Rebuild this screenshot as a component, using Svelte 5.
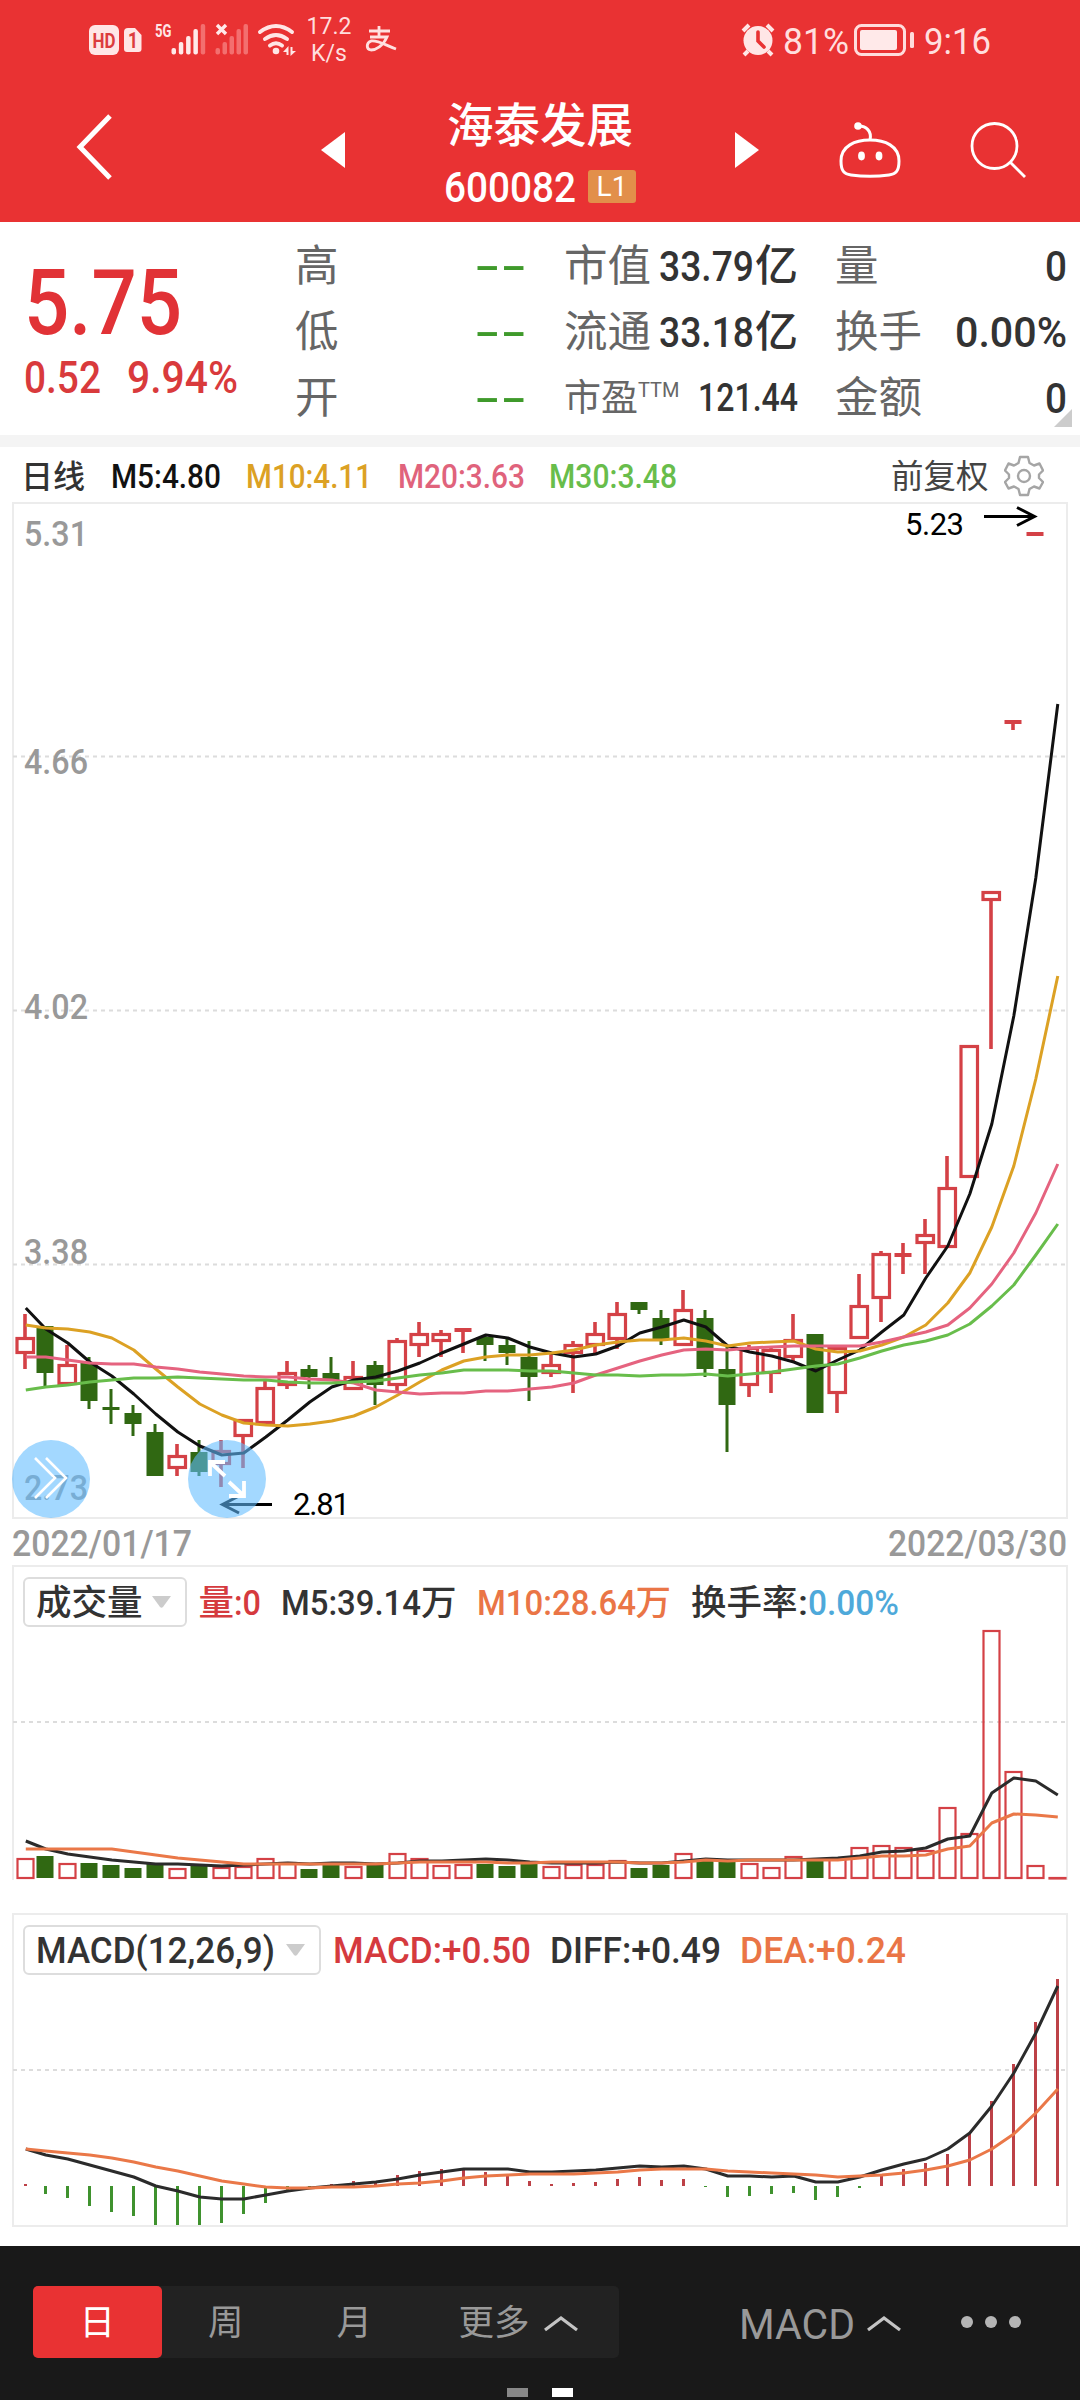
<script lang="ts">
  // x position of the n-th trading day, the first one is pushed off the frame a little
  const X0 = 23;
  const STEP = 22;
  const dayX = (i: number) => (i === 0 ? X0 + 2 : X0 + STEP * i);

  function line(values: number[]) {
    return values.map((y, i) => `${dayX(i) + 0.8},${y}`).join(' ');
  }

  // [high, body top, body bottom, low, up?]
  const candles: [number, number, number, number, number][] = [
    [1314, 1337, 1354, 1369, 1], [1326, 1326, 1373, 1387, 0], [1345, 1364, 1385, 1385, 1],
    [1357, 1362, 1401, 1409, 0], [1389, 1407, 1410, 1424, 0], [1405, 1413, 1424, 1436, 0],
    [1424, 1432, 1476, 1476, 0], [1444, 1455, 1469, 1476, 1], [1440, 1452, 1472, 1476, 0],
    [1440, 1450, 1465, 1487, 1], [1419, 1419, 1437, 1468, 1], [1381, 1387, 1424, 1424, 1],
    [1361, 1372, 1386, 1389, 1], [1365, 1369, 1377, 1389, 0], [1357, 1373, 1380, 1380, 0],
    [1361, 1376, 1390, 1390, 1], [1361, 1365, 1385, 1405, 0], [1338, 1340, 1386, 1391, 1],
    [1322, 1333, 1346, 1357, 1], [1330, 1333, 1342, 1357, 1], [1328, 1328, 1332, 1353, 1],
    [1336, 1337, 1345, 1361, 0], [1339, 1345, 1353, 1365, 0], [1341, 1357, 1377, 1401, 0],
    [1353, 1364, 1374, 1377, 1], [1341, 1344, 1354, 1393, 1], [1322, 1333, 1346, 1354, 1],
    [1302, 1313, 1340, 1349, 1], [1302, 1302, 1310, 1314, 0], [1310, 1318, 1339, 1345, 0],
    [1290, 1309, 1346, 1346, 1], [1310, 1318, 1369, 1377, 0], [1346, 1369, 1405, 1452, 0],
    [1345, 1347, 1386, 1397, 1], [1346, 1349, 1374, 1393, 1], [1314, 1339, 1358, 1361, 1],
    [1334, 1334, 1413, 1413, 0], [1345, 1347, 1394, 1413, 1], [1274, 1305, 1339, 1339, 1],
    [1251, 1253, 1299, 1322, 1], [1243, 1253, 1257, 1274, 1], [1219, 1234, 1244, 1274, 1],
    [1156, 1187, 1248, 1248, 1], [1045, 1045, 1178, 1178, 1], [891, 891, 901, 1049, 1],
    [720, 720, 724, 730, 1], [532, 532, 536, 536, 1]
  ];

  const ma5 = [1308, 1329, 1343, 1362, 1376, 1394, 1414, 1432, 1446, 1455, 1453, 1437, 1420, 1402, 1387, 1380, 1377, 1371, 1363, 1353, 1344, 1335, 1338, 1347, 1353, 1357, 1354, 1346, 1333, 1327, 1320, 1327, 1346, 1352, 1356, 1362, 1371, 1360, 1350, 1332, 1315, 1278, 1246, 1194, 1124, 1016, 878, 704];
  const ma10 = [1325, 1328, 1329, 1332, 1338, 1350, 1369, 1387, 1404, 1415, 1423, 1425, 1426, 1424, 1421, 1416, 1407, 1395, 1382, 1370, 1361, 1357, 1355, 1355, 1353, 1350, 1345, 1342, 1340, 1340, 1338, 1341, 1346, 1343, 1342, 1341, 1349, 1352, 1351, 1345, 1337, 1325, 1303, 1273, 1227, 1166, 1079, 976];
  const ma20 = [1357, 1357, 1360, 1363, 1364, 1364, 1367, 1369, 1372, 1374, 1376, 1377, 1377, 1379, 1380, 1383, 1390, 1392, 1394, 1393, 1393, 1391, 1391, 1389, 1387, 1383, 1375, 1368, 1361, 1355, 1350, 1349, 1350, 1348, 1347, 1346, 1346, 1346, 1346, 1342, 1337, 1332, 1325, 1308, 1284, 1253, 1213, 1164];
  const ma30 = [1390, 1387, 1385, 1382, 1380, 1378, 1378, 1377, 1378, 1379, 1380, 1380, 1382, 1383, 1383, 1382, 1381, 1378, 1375, 1373, 1370, 1370, 1370, 1371, 1371, 1373, 1375, 1375, 1376, 1375, 1375, 1374, 1376, 1374, 1372, 1369, 1366, 1364, 1358, 1351, 1345, 1341, 1335, 1324, 1306, 1285, 1255, 1224];

  const volumes = [1858, 1856, 1863, 1863, 1865, 1868, 1864, 1868, 1866, 1867, 1866, 1858, 1862, 1869, 1865, 1866, 1865, 1853, 1858, 1865, 1864, 1864, 1866, 1861, 1866, 1864, 1864, 1860, 1868, 1865, 1853, 1859, 1862, 1863, 1867, 1856, 1860, 1858, 1847, 1845, 1847, 1850, 1807, 1833, 1630, 1771, 1865, 1877];
  const volumeDown = [1, 3, 4, 5, 6, 8, 13, 14, 16, 21, 22, 23, 28, 29, 31, 32, 36];
  const vma5 = [1841, 1849, 1854, 1857, 1860, 1862, 1864, 1864, 1865, 1866, 1865, 1864, 1863, 1864, 1863, 1863, 1864, 1863, 1861, 1861, 1860, 1859, 1860, 1862, 1863, 1863, 1863, 1862, 1863, 1863, 1861, 1859, 1860, 1860, 1860, 1860, 1859, 1858, 1856, 1852, 1851, 1848, 1839, 1836, 1793, 1778, 1781, 1795];
  const vma10 = [1849, 1849, 1849, 1849, 1849, 1852, 1855, 1858, 1860, 1862, 1864, 1864, 1864, 1864, 1864, 1864, 1864, 1863, 1862, 1862, 1862, 1862, 1863, 1863, 1862, 1862, 1862, 1862, 1863, 1863, 1862, 1860, 1861, 1860, 1860, 1860, 1860, 1860, 1858, 1856, 1856, 1855, 1849, 1846, 1823, 1814, 1815, 1817];

  const ZERO = 2186;
  const macd = [2184, 2194, 2198, 2206, 2212, 2216, 2225, 2225, 2225, 2223, 2214, 2203, 2192, 2187, 2184, 2181, 2181, 2175, 2171, 2169, 2170, 2172, 2176, 2181, 2184, 2183, 2182, 2179, 2177, 2180, 2179, 2187, 2197, 2196, 2194, 2193, 2200, 2197, 2188, 2176, 2169, 2163, 2154, 2133, 2101, 2064, 2022, 1979];
  const diff = [2149, 2155, 2159, 2165, 2171, 2177, 2186, 2191, 2197, 2199, 2199, 2195, 2191, 2188, 2186, 2184, 2182, 2179, 2175, 2172, 2169, 2169, 2169, 2172, 2172, 2171, 2170, 2168, 2166, 2167, 2166, 2169, 2176, 2176, 2177, 2176, 2182, 2182, 2177, 2170, 2164, 2159, 2149, 2133, 2106, 2073, 2033, 1986];
  const dea = [2149, 2151, 2153, 2155, 2158, 2162, 2167, 2171, 2176, 2181, 2184, 2187, 2188, 2188, 2187, 2187, 2186, 2184, 2183, 2181, 2178, 2176, 2175, 2174, 2174, 2174, 2173, 2172, 2170, 2169, 2169, 2169, 2171, 2172, 2173, 2174, 2175, 2177, 2176, 2175, 2173, 2170, 2166, 2160, 2149, 2134, 2113, 2089];

  const axis = [
    { y: 546, label: '5.31' },
    { y: 774, label: '4.66' },
    { y: 1019, label: '4.02' },
    { y: 1264, label: '3.38' },
    { y: 1500, label: '2.73' }
  ];
  const bars = [48, 42, 36, 29, 24];
</script>

<!-- Condensed figures: text squeezed to a fixed width -->
{#snippet num(text: string, w: number, size: number)}
  <svg class="num" width={w} height={size}>
    <text x="0" y={size * 0.856} font-size={size} textLength={w} lengthAdjust="spacingAndGlyphs">{text}</text>
  </svg>
{/snippet}

{#snippet noValue()}
  <svg class="no-value" width="53" height="62">
    <text x="0" y="47" font-size="50" textLength="53" lengthAdjust="spacingAndGlyphs">--</text>
  </svg>
{/snippet}

{#snippet caret()}
  <svg class="caret" width="19" height="12"><path d="M0 0H19L11 11Q9.500 12.500 8 11Z" fill="#ccc" /></svg>
{/snippet}

{#snippet chevronUp()}
  <svg width="36" height="18"><path d="M2 15L18 3L34 15" fill="none" stroke="#c4c4c4" stroke-width="3.200" /></svg>
{/snippet}

<div class="screen">
  <header>
    <div class="status">
      <svg class="status-left" width="240" height="80" viewBox="80 0 240 80">
        <rect x="89" y="25" width="30" height="30" rx="6" fill="#ffe6e6" />
        <text x="92.500" y="47.500" font-size="20" font-weight="700" fill="#dc3c3e" textLength="23" lengthAdjust="spacingAndGlyphs">HD</text>
        <path d="M128 28H135L141.500 35V49Q141.500 52 138.500 52H127Q124 52 124 49V32Q124 28 128 28Z" fill="#ffe6e6" />
        <text x="128" y="48" font-size="22" font-weight="700" fill="#dc3c3e" textLength="10" lengthAdjust="spacingAndGlyphs">1</text>
        <text x="155" y="37" font-size="18" font-weight="700" fill="#ffe6e6" textLength="16.500" lengthAdjust="spacingAndGlyphs">5G</text>
        {#each bars as y, i}
          <rect x={171.5 + i * 7.3} {y} width="4.500" height={54.5 - y} rx="2" fill={i < 4 ? '#ffe9e9' : '#f36f6f'} />
          <rect x={215.5 + i * 7} {y} width="4.500" height={54.5 - y} rx="2" fill="#f36f6f" />
        {/each}
        <path d="M217 25L226 34M226 25L217 34" stroke="#ffe9e9" stroke-width="3.400" />
        <g fill="none" stroke="#ffe6e6" stroke-width="4" stroke-linecap="round">
          <path d="M260 32Q276 20 292 32" />
          <path d="M265 39Q276 31 287 39" />
          <path d="M270 45.500Q276 41 282 45.500" />
        </g>
        <circle cx="276" cy="51" r="3.300" fill="#ffe6e6" />
        <path d="M283 52L288.500 46V55H286.500V52ZM296 51L290.500 56V47H292.500V51Z" fill="#ffe6e6" />
      </svg>
      <div class="speed"><span>17.2</span><span>K/s</span></div>
      <svg class="pay" width="32" height="30" viewBox="0 0 32 30" fill="none" stroke="#ffe0e0" stroke-width="2.800">
        <path d="M4 5H25M14 0V11M5 11H22C18 20 11 24 6 24C1 23 1 17 6 15C13 14 20 19 31 23" />
      </svg>
      <div class="status-right">
        <svg width="34" height="34" viewBox="0 0 34 34">
          <circle cx="17" cy="17.500" r="14.500" fill="#ffe6e6" />
          <path d="M2 8L8 2M26 2L32 8M7 28L3 32M27 28L31 32" stroke="#ffe6e6" stroke-width="4" />
          <path d="M17 9V18L23 24" fill="none" stroke="#e93233" stroke-width="3.600" stroke-linecap="round" />
        </svg>
        <span class="battery-text">{@render num('81%', 66, 37)}</span>
        <svg class="battery" width="60" height="34" viewBox="0 0 60 34">
          <rect x="1.500" y="2.500" width="49" height="29" rx="6" fill="none" stroke="#ffdcdc" stroke-width="3" />
          <rect x="6" y="7" width="37" height="20" rx="2" fill="#ffe9e9" />
          <rect x="56" y="9" width="4" height="16" rx="1.500" fill="#ffdcdc" />
        </svg>
        <span class="clock">{@render num('9:16', 67, 37)}</span>
      </div>
    </div>
    <nav>
      <svg class="back" width="39" height="68"><path d="M35 3L5 34L35 65" fill="none" stroke="#fff" stroke-width="5" /></svg>
      <svg class="prev" width="24" height="36"><path d="M0 18L24 0V36Z" fill="#fff" /></svg>
      <div class="title">
        <h1>海泰发展</h1>
        <div class="code">{@render num('600082', 132, 42)}<span class="level">L1</span></div>
      </div>
      <svg width="24" height="36"><path d="M24 18L0 0V36Z" fill="#fff" /></svg>
      <svg class="robot" width="62" height="58" viewBox="0 0 62 58" fill="none" stroke="#fff" stroke-width="3">
        <path d="M31 19C46 19 60 25 60 40C60 50 57 53 50 54Q31 56.500 12 54C5 53 2 50 2 40C2 25 16 19 31 19Z" />
        <path d="M20 5C27 5 33 10 31 19" />
        <circle cx="19" cy="5" r="3.800" fill="#fff" stroke="none" />
        <ellipse cx="22.500" cy="35" rx="3.400" ry="4.400" fill="#fff" stroke="none" />
        <ellipse cx="40" cy="35" rx="3.400" ry="4.400" fill="#fff" stroke="none" />
      </svg>
      <svg class="search" width="58" height="58" viewBox="0 0 58 58" fill="none" stroke="#fff" stroke-width="2.800">
        <circle cx="24.500" cy="25" r="22.500" />
        <path d="M40 41L55 56" />
      </svg>
    </nav>
  </header>

  <section class="quote">
    <div class="price">
      <div class="last">{@render num('5.75', 158, 90)}</div>
      <div class="change">{@render num('0.52', 77, 45)}{@render num('9.94%', 111, 45)}</div>
    </div>
    <dl class="stats">
      <div><dt>高</dt><dd>{@render noValue()}</dd></div>
      <div><dt>市值</dt><dd>{@render num('33.79', 95, 43)}<span>亿</span></dd></div>
      <div><dt>量</dt><dd>{@render num('0', 22, 43)}</dd></div>
      <div><dt>低</dt><dd>{@render noValue()}</dd></div>
      <div><dt>流通</dt><dd>{@render num('33.18', 95, 43)}<span>亿</span></dd></div>
      <div><dt>换手</dt><dd>{@render num('0.00%', 112, 43)}</dd></div>
      <div><dt>开</dt><dd>{@render noValue()}</dd></div>
      <div><dt class="small">市盈<sup>TTM</sup></dt><dd>{@render num('121.44', 100, 38)}</dd></div>
      <div><dt>金额</dt><dd>{@render num('0', 22, 43)}</dd></div>
    </dl>
    <svg class="corner" width="18" height="18"><path d="M18 0V18H0Z" fill="#ccc" /></svg>
  </section>

  <section class="averages">
    <span class="period">日线</span>
    <span class="m5">{@render num('M5:4.80', 110, 34)}</span>
    <span class="m10">{@render num('M10:4.11', 126, 34)}</span>
    <span class="m20">{@render num('M20:3.63', 127, 34)}</span>
    <span class="m30">{@render num('M30:3.48', 128, 34)}</span>
    <span class="adjust">前复权</span>
    <svg class="gear" width="40" height="42" viewBox="0 0 40 42" fill="none" stroke="#a5a5a5" stroke-width="2.400" stroke-linejoin="round">
      <path d="M16 2H24L25.500 8L30 10.500L35.500 8.500L39 15.500L35 19.500V23L39 27L35.500 33.500L30 31.500L25.500 34L24 40H16L14.500 34L10 31.500L4.500 33.500L1 27L5 23V19.500L1 15.500L4.500 8.500L10 10.500L14.500 8Z" />
      <circle cx="20" cy="21" r="6" />
    </svg>
  </section>

  <svg class="chart" width="1080" height="1018" viewBox="0 502 1080 1018">
    <rect x="13" y="503" width="1054" height="1015" class="frame" />
    {#each [756.5, 1010.5, 1264.5] as y}
      <path d="M13 {y}H1066" class="grid" />
    {/each}
    {#each axis as a}
      <text x="24" y={a.y} class="axis" textLength="64" lengthAdjust="spacingAndGlyphs">{a.label}</text>
    {/each}
    {#each candles as [high, top, bottom, low, up], i}
      <path d="M{dayX(i)} {high}V{top}M{dayX(i)} {bottom}V{low}" class={up ? 'wick-up' : 'wick-down'} />
      {#if up && bottom - top > 4}
        <rect x={dayX(i) - 8} y={top + 1.5} width="16.500" height={bottom - top - 3} class="up" />
      {:else}
        <rect x={dayX(i) - 8.5} y={top} width="17" height={bottom - top} class={up ? 'flat' : 'down'} />
      {/if}
    {/each}
    <polyline points={line(ma5)} stroke="#111" class="curve" />
    <polyline points={line(ma10)} stroke="#dca124" class="curve" />
    <polyline points={line(ma20)} stroke="#e5637f" class="curve" />
    <polyline points={line(ma30)} stroke="#68bd4b" class="curve" />
    <text x="905" y="535" class="mark" textLength="59">5.23</text>
    <path d="M984 516.500H1034M1017 507.500L1034.500 516.500L1017 525.500" class="arrow" />
    <text x="293" y="1515" class="mark" textLength="57">2.81</text>
    <path d="M272 1504.500H223M239 1496L222.500 1504.500L239 1513" class="arrow" />
    <circle cx="51" cy="1479" r="39" class="bubble" />
    <path d="M35 1458L55 1478L35 1498M46 1458L66 1478L46 1498" fill="none" stroke="#fff" stroke-width="2.600" />
    <circle cx="227" cy="1479" r="39" class="bubble" />
    <path d="M225 1476L210 1462M210 1476V1462H225M229 1482L244 1496M229 1496H244V1481" fill="none" stroke="#fff" stroke-width="3.800" />
  </svg>

  <div class="dates">{@render num('2022/01/17', 180, 36)}{@render num('2022/03/30', 179, 36)}</div>

  <section class="panel volume">
    <div class="legend">
      <div class="select"><span>成交量</span>{@render caret()}</div>
      <span class="red"><b>量</b>{@render num(':0', 27, 35)}</span>
      <span class="dark">{@render num('M5:39.14', 140, 35)}<b>万</b></span>
      <span class="orange">{@render num('M10:28.64', 159, 35)}<b>万</b></span>
      <span class="dark"><b>换手率</b>{@render num(':', 10, 35)}<span class="blue">{@render num('0.00%', 91, 35)}</span></span>
    </div>
    <svg class="plot" width="1080" height="252" viewBox="0 1628 1080 252">
      <path d="M13 1722H1066" class="grid" />
      {#each volumes as y, i}
        {#if volumeDown.includes(i)}
          <rect x={dayX(i) - 8.5} {y} width="17" height={1878 - y} class="down" />
        {:else}
          <rect x={dayX(i) - 7.5} y={y + 1} width="16" height={Math.max(1877 - y, 0.5)} class="vol-up" />
        {/if}
      {/each}
      <polyline points={line(vma5)} stroke="#2b2b2b" class="curve" />
      <polyline points={line(vma10)} stroke="#ea7848" class="curve" />
    </svg>
  </section>

  <section class="panel macd">
    <div class="legend">
      <div class="select">{@render num('MACD(12,26,9)', 239, 36)}{@render caret()}</div>
      <span class="red">{@render num('MACD:+0.50', 198, 36)}</span>
      <span class="dark">{@render num('DIFF:+0.49', 171, 36)}</span>
      <span class="orange">{@render num('DEA:+0.24', 166, 36)}</span>
    </div>
    <svg class="plot" width="1080" height="251" viewBox="0 1976 1080 251">
      <path d="M13 2070H1066" class="grid" />
      {#each macd as y, i}
        <rect x={dayX(i) - 1} y={Math.min(y, ZERO)} width="3" height={Math.abs(y - ZERO)} fill={y < ZERO ? '#bd4147' : '#3f922e'} />
      {/each}
      <polyline points={line(diff)} stroke="#2b2b2b" class="curve" />
      <polyline points={line(dea)} stroke="#ea7848" class="curve" />
    </svg>
  </section>

  <footer>
    <div class="toolbar">
      <div class="periods">
        <span class="active">日</span>
        <span>周</span>
        <span>月</span>
        <span class="more">更多{@render chevronUp()}</span>
      </div>
      <div class="indicator">{@render num('MACD', 116, 42)}{@render chevronUp()}</div>
      <svg width="62" height="14"><circle cx="7" cy="7" r="6" fill="#b5b5b5" /><circle cx="31" cy="7" r="6" fill="#b5b5b5" /><circle cx="55" cy="7" r="6" fill="#b5b5b5" /></svg>
    </div>
    <div class="pager"><i></i><i class="on"></i></div>
  </footer>
</div>

<style>
  :global(body) {
    margin: 0;
    background: #fff;
  }

  .screen {
    display: flex;
    flex-direction: column;
    width: 1080px;
    height: 2400px;
    overflow: hidden;
    background: #fff;
    color: #333;
    font-family: Roboto, 'Noto Sans CJK SC', sans-serif;
    line-height: 1;
  }

  svg {
    display: block;
    flex: none;
  }

  .num {
    overflow: visible;
    fill: currentColor;
    font-weight: 500;
  }

  /* Header */
  header {
    height: 222px;
    background: #e93233;
    color: #fff;
  }

  .status {
    display: flex;
    height: 80px;
    color: #ffdede;
  }

  .status-left {
    margin-left: 80px;
    margin-right: -17px;
  }

  .speed {
    display: flex;
    flex-direction: column;
    align-items: center;
    width: 52px;
    padding-top: 13px;
    font-size: 23px;
    line-height: 27px;
  }

  .pay {
    margin: 26px 0 0 10px;
  }

  .status-right {
    display: flex;
    align-items: center;
    height: 80px;
    margin-left: 344px;
  }

  .status-right .num {
    font-weight: 400;
  }

  .battery-text {
    margin-left: 8px;
  }

  .battery {
    margin-left: 5px;
  }

  .clock {
    margin-left: 10px;
  }

  nav {
    display: flex;
    align-items: center;
    height: 140px;
    padding-left: 75px;
  }

  .back {
    margin-bottom: 6px;
  }

  .prev {
    margin-left: 207px;
  }

  .title {
    display: flex;
    flex-direction: column;
    align-items: center;
    width: 390px;
    gap: 18px;
    padding-top: 9px;
  }

  h1 {
    margin: 0;
    font-size: 46.500px;
    font-weight: 500;
  }

  .code {
    display: flex;
    align-items: center;
    gap: 12px;
    height: 38px;
  }

  .level {
    width: 48px;
    border-radius: 3px;
    background: #e28f4a;
    font-size: 28px;
    line-height: 33px;
    text-align: center;
  }

  .robot {
    margin-left: 80px;
  }

  .search {
    margin-left: 69px;
  }

  /* Quote */
  .quote {
    position: relative;
    display: flex;
    height: 213px;
    border-bottom: 12px solid #f4f4f4;
  }

  .price {
    width: 295px;
    box-sizing: border-box;
    padding: 35px 0 0 24px;
    color: #e13236;
  }

  .change {
    display: flex;
    gap: 26px;
    margin-top: 7px;
    color: #d93a3c;
  }

  .stats {
    display: grid;
    grid-template-columns: 232px 234px 232px;
    grid-auto-rows: 66px;
    column-gap: 37px;
    margin: 10px 0 0;
  }

  .stats > div {
    display: flex;
    align-items: center;
    justify-content: space-between;
  }

  dt {
    padding-top: 3px;
    color: #666;
    font-size: 43.500px;
  }

  dt.small {
    font-size: 37px;
  }

  sup {
    font-size: 20px;
    vertical-align: 14px;
    line-height: 0;
  }

  dd {
    display: flex;
    align-items: center;
    gap: 1px;
    margin: 0;
    font-size: 43px;
    font-weight: 500;
  }

  dd span {
    padding-top: 3px;
  }

  .no-value {
    fill: #3f9a2b;
    font-family: 'Liberation Sans', sans-serif;
    font-weight: 400;
  }

  .corner {
    position: absolute;
    right: 8px;
    bottom: 8px;
  }

  /* Moving averages */
  .averages {
    display: flex;
    align-items: center;
    height: 55px;
    box-sizing: border-box;
    padding: 3px 0 0 21px;
    font-size: 32.500px;
  }

  .period {
    margin-right: 26px;
    padding-top: 2px;
    font-size: 32px;
    font-weight: 500;
  }

  .m5 {
    color: #111;
    margin-right: 25px;
  }

  .m10 {
    color: #dca124;
    margin-right: 26px;
  }

  .m20 {
    color: #e0637c;
    margin-right: 24px;
  }

  .m30 {
    color: #68bd4b;
  }

  .adjust {
    margin: 0 15px 0 214px;
    padding-top: 3px;
    color: #444;
  }

  .gear {
    margin-bottom: 1px;
  }

  /* Charts */
  .chart {
    overflow: visible;
  }

  .frame {
    fill: none;
    stroke: #ececec;
    stroke-width: 2;
  }

  .grid {
    stroke: #dcdcdc;
    stroke-width: 2;
    stroke-dasharray: 4 4;
  }

  .axis {
    fill: #999;
    font-size: 35px;
    font-weight: 500;
  }

  .mark {
    fill: #000;
    font-size: 31px;
  }

  .curve {
    fill: none;
    stroke-width: 3;
    stroke-linejoin: round;
  }

  .arrow {
    fill: none;
    stroke: #000;
    stroke-width: 3;
  }

  .bubble {
    fill: rgba(96, 188, 255, 0.58);
  }

  .up,
  .vol-up {
    fill: none;
    stroke: #d44146;
    stroke-width: 3.200;
  }

  .vol-up {
    stroke-width: 2.200;
  }

  .flat {
    fill: #d44146;
  }

  .down {
    fill: #306812;
  }

  .wick-up {
    stroke: #d44146;
    stroke-width: 3.600;
  }

  .wick-down {
    stroke: #306812;
    stroke-width: 3;
  }

  .dates {
    display: flex;
    justify-content: space-between;
    align-items: center;
    height: 45px;
    padding: 0 13px 0 12px;
    color: #999;
  }

  .panel {
    box-sizing: border-box;
    margin: 0 12px;
    border: 2px solid #ececec;
  }

  .volume {
    height: 315px;
    border-bottom-width: 0;
  }

  .macd {
    height: 314px;
    margin-top: 33px;
  }

  .plot {
    margin-left: -14px;
  }

  .legend {
    display: flex;
    align-items: center;
    box-sizing: border-box;
    height: 61px;
    padding: 9px 0 0 9px;
  }

  .legend span {
    display: flex;
    align-items: center;
  }

  .legend b {
    padding-top: 3px;
    font-size: 35.500px;
    font-weight: 500;
  }

  .select {
    display: flex;
    align-items: center;
    box-sizing: border-box;
    height: 50px;
    padding: 0 14px 0 11px;
    border: 2px solid #ddd;
    border-radius: 6px;
    font-size: 35.500px;
    font-weight: 500;
  }

  .select span {
    padding-top: 3px;
  }

  .caret {
    margin-left: 9px;
  }

  .macd .caret {
    margin-left: 11px;
  }

  .red {
    margin-left: 12px;
    color: #d53a3e;
  }

  .dark {
    margin-left: 20px;
  }

  .orange {
    margin-left: 20px;
    color: #ea7546;
  }

  .macd .dark,
  .macd .orange {
    margin-left: 19px;
  }

  .blue {
    color: #4ea9da;
  }

  /* Footer */
  footer {
    height: 154px;
    margin-top: 19px;
    background: #191919;
    color: #999;
  }

  .toolbar {
    display: flex;
    align-items: center;
    height: 72px;
    padding: 40px 0 0 33px;
    font-size: 35.500px;
  }

  .periods {
    display: flex;
    width: 586px;
    height: 72px;
    border-radius: 5px;
    background: #222;
  }

  .periods span {
    display: flex;
    align-items: center;
    justify-content: center;
    box-sizing: border-box;
    width: 128.500px;
    padding-top: 4px;
  }

  .periods .active {
    border-radius: 5px;
    background: #e93233;
    color: #fff;
  }

  .periods .more {
    gap: 13px;
    width: 200px;
  }

  .indicator {
    display: flex;
    align-items: center;
    gap: 11px;
    margin: 0 58px 0 120px;
    padding-top: 3px;
  }

  .indicator .num {
    font-weight: 400;
  }

  .pager {
    display: flex;
    justify-content: center;
    gap: 24px;
    padding-top: 30px;
  }

  .pager i {
    width: 21px;
    height: 9px;
    background: #888;
  }

  .pager .on {
    background: #fff;
  }
</style>
